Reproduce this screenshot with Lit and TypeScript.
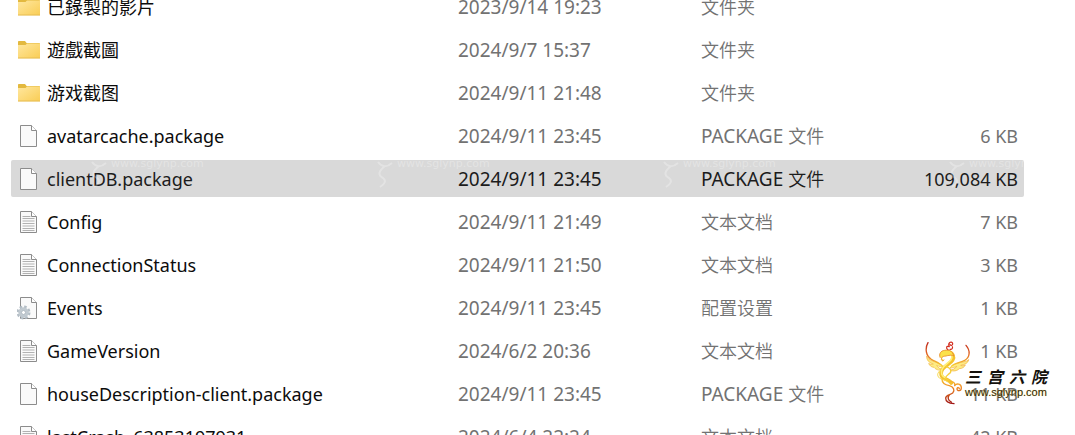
import { LitElement, html, css, svg } from "lit";
import { customElement, property } from "lit/decorators.js";
import { classMap } from "lit/directives/class-map.js";

type Kind = "folder" | "blank" | "text" | "config";

interface Entry {
  kind: Kind;
  name: string;
  date: string;
  size: string;
  selected?: boolean;
}

const ENTRIES: Entry[] = [
  { kind: "folder", name: "已錄製的影片", date: "2023/9/14 19:23", size: "" },
  { kind: "folder", name: "遊戲截圖", date: "2024/9/7 15:37", size: "" },
  { kind: "folder", name: "游戏截图", date: "2024/9/11 21:48", size: "" },
  { kind: "blank", name: "avatarcache.package", date: "2024/9/11 23:45", size: "6 KB" },
  { kind: "blank", name: "clientDB.package", date: "2024/9/11 23:45", size: "109,084 KB", selected: true },
  { kind: "text", name: "Config", date: "2024/9/11 21:49", size: "7 KB" },
  { kind: "text", name: "ConnectionStatus", date: "2024/9/11 21:50", size: "3 KB" },
  { kind: "config", name: "Events", date: "2024/9/11 23:45", size: "1 KB" },
  { kind: "text", name: "GameVersion", date: "2024/6/2 20:36", size: "1 KB" },
  { kind: "blank", name: "houseDescription-client.package", date: "2024/9/11 23:45", size: "11 KB" },
  { kind: "text", name: "lastCrash_63853197931", date: "2024/6/4 22:24", size: "42 KB" },
];

const TYPE_LABEL = {
  folder: html`<span class="cjk">文件夹</span>`,
  blank: html`PACKAGE <span class="cjk">文件</span>`,
  text: html`<span class="cjk">文本文档</span>`,
  config: html`<span class="cjk">配置设置</span>`,
};

@customElement("file-icon")
class FileIcon extends LitElement {
  @property() kind: Kind = "blank";

  static styles = css`
    :host {
      display: block;
      width: 24px;
      height: 24px;
      flex: none;
    }
    svg {
      display: block;
    }
  `;

  private folder() {
    return svg`
      <defs>
        <linearGradient id="f" x1="0" y1="0" x2="1" y2="1">
          <stop offset="0" stop-color="#ffe79f"></stop>
          <stop offset="1" stop-color="#f9cd55"></stop>
        </linearGradient>
      </defs>
      <path d="M1 3.8Q1 3 1.8 3H8l1.6 2H22.200q.8 0 .8.8V19H1z" fill="#e3b93f"></path>
      <path d="M1 7h7.500l1.500-1.500H23V20.200H1z" fill="url(#f)"></path>
      <path d="M1 20H23" stroke="#e6bd55" stroke-width="1"></path>`;
  }

  private page() {
    return svg`
      <path d="M3.500 1.500h11l5 5v16h-16z" fill="#fafafa" stroke="#8c8c8c"></path>
      <path d="M14.500 1.500v5h5" fill="#fff" stroke="#8c8c8c"></path>`;
  }

  private lines() {
    return svg`<path d="M5.500 6.500h8M5.500 8.500h12M5.500 11h12M5.500 13.500h12M5.500 16h12M5.500 18.500h12M5.500 20.500h12"
      stroke="#b2b2b2" stroke-width="1"></path>`;
  }

  private gear() {
    return svg`
      <circle cx="6.500" cy="16.500" r="5.800" fill="none" stroke="#b3bdc5" stroke-width="2.400" stroke-dasharray="2.550 2"></circle>
      <circle cx="6.500" cy="16.500" r="3.700" fill="#edf1f4" stroke="#c0c9d0" stroke-width="3"></circle>
      <circle cx="6.500" cy="16.500" r="2" fill="#fff" stroke="#97a3ad" stroke-width=".7"></circle>`;
  }

  render() {
    const k = this.kind;
    return html`<svg width="24" height="24" viewBox="0 0 24 24" aria-hidden="true">
      ${k === "folder" ? this.folder() : this.page()}
      ${k === "text" ? this.lines() : null}
      ${k === "config" ? this.gear() : null}
    </svg>`;
  }
}

@customElement("phoenix-logo")
class PhoenixLogo extends LitElement {
  static styles = css`
    :host {
      display: flex;
      align-items: flex-start;
    }
    svg {
      display: block;
      width: 46px;
      height: 68px;
      flex: none;
    }
    .words {
      display: flex;
      flex-direction: column;
      margin-left: -6px;
      padding-top: 28px;
      color: #14110c;
    }
    .brand {
      display: flex;
      gap: 6px;
      font: italic 700 16px/20px "Noto Sans CJK SC", sans-serif;
    }
    .site {
      font: 11px/12px "Liberation Sans", sans-serif;
      color: #2e2508;
      text-shadow: 0 0 1px #f3dc70;
    }
  `;

  render() {
    return html`
      <svg viewBox="15 12 138 204" aria-hidden="true" fill="none" stroke-linecap="round" stroke-linejoin="round">
        <defs>
          <linearGradient id="wing" gradientUnits="userSpaceOnUse" x1="0" y1="26" x2="0" y2="98">
            <stop offset="0" stop-color="#bf2a1e"></stop>
            <stop offset=".5" stop-color="#e46a22"></stop>
            <stop offset="1" stop-color="#f9d936"></stop>
          </linearGradient>
          <linearGradient id="tail" gradientUnits="userSpaceOnUse" x1="0" y1="125" x2="0" y2="208">
            <stop offset="0" stop-color="#f9d93a"></stop>
            <stop offset=".45" stop-color="#ee8420"></stop>
            <stop offset="1" stop-color="#a01614"></stop>
          </linearGradient>
        </defs>
        <path d="M20 68C26 78 34 80 46 84C56 88 66 92 72 100C64 98 56 98 50 94C56 104 64 106 70 104C62 112 48 108 42 100C34 100 28 94 26 88C30 91 36 92 40 90C28 86 20 80 20 68Z" fill="#fdeb84" stroke="#f2b63c" stroke-width="2"></path>
        <path d="M146 78C138 84 124 84 112 88C102 90 94 96 90 102C98 102 104 100 110 97C106 104 98 108 90 108C100 114 112 110 118 104C128 104 134 98 136 93C132 96 126 96 122 94C134 92 144 88 146 78Z" fill="#fdeb84" stroke="#f2ae3c" stroke-width="2"></path>
        <path d="M24 26C14 44 18 66 34 76C48 84 60 86 68 98" stroke="url(#wing)" stroke-width="4"></path>
        <path d="M138 34C152 50 150 70 134 79C120 86 104 86 94 97" stroke="url(#wing)" stroke-width="4"></path>
        <path d="M86 54C98 56 104 68 98 78C92 88 76 94 68 105C60 116 62 130 74 134C84 137 90 140 94 147" stroke="#f4c22e" stroke-width="11"></path>
        <path d="M87 57C96 60 98 70 93 77C86 86 74 92 67 104C60 116 66 128 76 131" stroke="#fff07a" stroke-width="5"></path>
        <path d="M60 70C56 60 62 50 74 49C84 46 92 49 97 56L102 66C96 62 88 64 82 65C74 68 66 64 64 76C66 82 70 82 72 78" fill="#fbe14a" stroke="#e88a26" stroke-width="2.500"></path>
        <path d="M84 47C76 42 80 34 88 38C82 26 94 20 98 28C99 34 93 36 90 32M90 46C96 47 99 42 97 38" stroke="#d32c1e" stroke-width="3.500"></path>
        <path d="M80 98C94 104 98 114 84 122C76 128 74 134 84 138" stroke="#f6cf3a" stroke-width="4"></path>
        <path d="M62 108C52 116 50 124 58 132C66 138 76 136 82 143" stroke="#f9dd58" stroke-width="3"></path>
        <path d="M92 142C102 142 106 150 104 155C110 146 124 150 124 161C124 172 111 173 111 164C112 159 118 160 118 164" stroke="url(#tail)" stroke-width="4"></path>
        <path d="M66 136C66 148 76 153 88 155C100 158 106 168 98 177C90 183 78 182 77 192C77 202 88 208 102 209M88 183C82 190 84 200 94 204" stroke="url(#tail)" stroke-width="4"></path>
      </svg>
      <div class="words">
        <div class="brand"><span>三</span><span>宫</span><span>六</span><span>院</span></div>
        <div class="site">www.sglynp.com</div>
      </div>
    `;
  }
}

@customElement("app-root")
class AppRoot extends LitElement {
  static styles = css`
    :host {
      display: block;
      position: relative;
      height: 100vh;
      overflow: hidden;
      background: #fff;
      font-family: "Noto Sans", "Noto Sans CJK SC", sans-serif;
      font-size: 19px;
      line-height: 24px;
      color: #727272;
    }
    .list {
      padding: 0 51px 0 11px;
      margin-top: -18px;
    }
    table {
      width: 100%;
      table-layout: fixed;
      border-collapse: separate;
      border-spacing: 0 6px;
    }
    .c-name {
      width: 447px;
    }
    .c-date {
      width: 243px;
    }
    td {
      height: 37px;
      padding: 0;
      white-space: nowrap;
      text-align: left;
    }
    .name {
      color: #0c0c0c;
      font-size: 18px;
    }
    .file {
      display: flex;
      align-items: center;
      gap: 6px;
      padding-left: 6px;
    }
    td.size {
      text-align: right;
      padding-right: 6px;
      font-size: 18px;
    }
    .selected td {
      background: #d9d9d9;
      color: #1c1c1c;
    }
    .selected td:first-child {
      border-radius: 2px 0 0 2px;
    }
    .selected td:last-child {
      border-radius: 0 2px 2px 0;
    }
    .cjk {
      font-family: "Noto Sans CJK SC", sans-serif;
      font-size: 18px;
      font-weight: 350;
    }
    .marks {
      position: absolute;
      top: 157px;
      left: 91px;
      display: flex;
      gap: 172px;
      color: #fff;
      opacity: 0.28;
      pointer-events: none;
    }
    .mark {
      display: flex;
      width: 114px;
      gap: 4px;
      font: 11px/14px "DejaVu Sans", sans-serif;
    }
    .mark svg {
      flex: none;
    }
    .logo {
      position: absolute;
      right: 28px;
      top: 338px;
    }
  `;

  render() {
    return html`
      <div class="list">
        <table>
          <colgroup>
            <col class="c-name" />
            <col class="c-date" />
            <col />
            <col />
          </colgroup>
          <tbody>
            ${ENTRIES.map(
              (e) => html`<tr class=${classMap({ selected: !!e.selected })}>
                <td class="name">
                  <div class="file"><file-icon .kind=${e.kind}></file-icon><span>${e.name}</span></div>
                </td>
                <td>${e.date}</td>
                <td>${TYPE_LABEL[e.kind]}</td>
                <td class="size">${e.size}</td>
              </tr>`
            )}
          </tbody>
        </table>
      </div>
      <div class="marks" aria-hidden="true">
        ${[0, 1, 2, 3].map(
          () => html`<div class="mark">
            <svg width="16" height="34" viewBox="0 0 16 34" fill="none" stroke="#fff" stroke-width="2">
              <path d="M1 5q6 8 14 1M8 9q-10 8-2 12q5 4-3 9"></path>
            </svg>
            <span>www.sglynp.com</span>
          </div>`
        )}
      </div>
      <phoenix-logo class="logo"></phoenix-logo>
    `;
  }
}
